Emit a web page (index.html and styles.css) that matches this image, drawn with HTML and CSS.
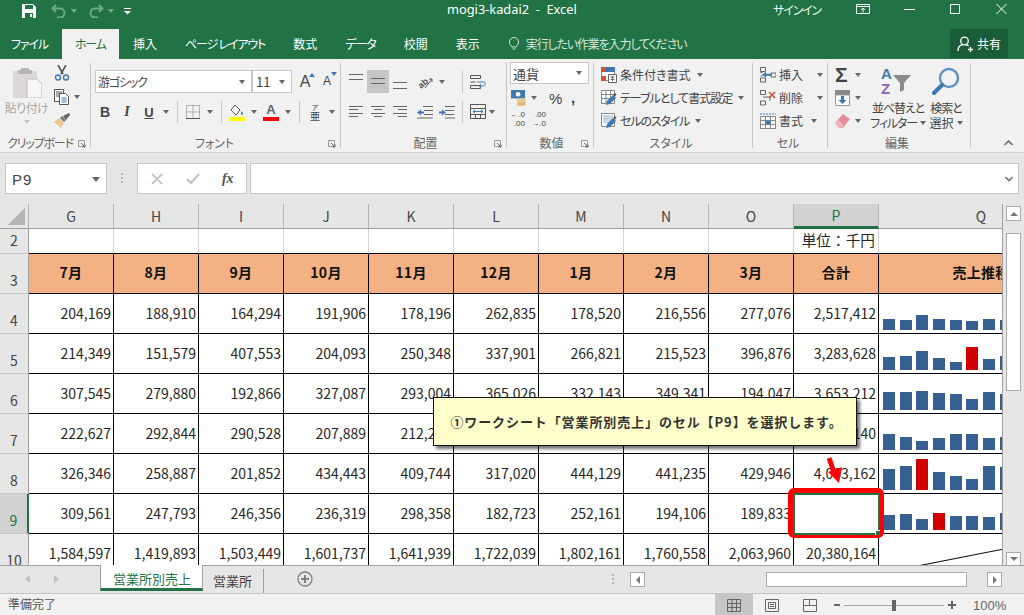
FILE: index.html
```html
<!DOCTYPE html>
<html lang="ja">
  <head>
    <meta charset="UTF-8" />
    <title>mogi3-kadai2 - Excel</title>
    <link rel="stylesheet" href="styles.css">
  </head>
  <body>
    <svg class="sprites">
      <symbol id="al-top" viewBox="0 0 22 23"><path d="M4 4.500h14M4 9.500h14" stroke="#666" fill="none"/></symbol>
      <symbol id="al-mid" viewBox="0 0 22 23"><path d="M4 8.500h14M4 13.500h14" stroke="#666" fill="none"/></symbol>
      <symbol id="al-bot" viewBox="0 0 22 23"><path d="M4 12.500h14M4 18.500h14" stroke="#666" fill="none"/></symbol>
      <symbol id="al-left" viewBox="0 0 22 23"><path d="M4 6.500h14M4 9.500h9M4 13.500h14M4 16.500h9" stroke="#666" fill="none"/></symbol>
      <symbol id="al-center" viewBox="0 0 22 23"><path d="M4 6.500h14M7 9.500h8M4 13.500h14M7 16.500h8" stroke="#666" fill="none"/></symbol>
      <symbol id="al-right" viewBox="0 0 22 23"><path d="M4 6.500h14M9 9.500h9M4 13.500h14M9 16.500h9" stroke="#666" fill="none"/></symbol>
      <symbol id="launcher" viewBox="0 0 8 8"><path d="M.5 .5h6v6h-6z" fill="none" stroke="#999"/><path d="M3 3l4 4M4.500 7H7V4.500" fill="none" stroke="#666"/></symbol>
      <symbol id="pen" viewBox="0 0 16 16"><path d="M5 15l1-4 6-6 3 3-6 6z" fill="#3f78b0"/><path d="M12 5l2-2 1.500 1.500-1.500 2z" fill="#555"/></symbol>
    </svg>

    <header class="titlebar">
      <div class="qat">
        <svg class="qat-save" viewBox="0 0 14 14"><path d="M0 0h11l3 3v11H0z" fill="#fff"/><path d="M3 1h8v4H3zM3 9h8v5H3z" fill="#217346"/><path d="M8 10h2v3H8z" fill="#fff"/></svg>
        <svg class="qat-arrow" viewBox="0 0 16 14"><path d="M5 1L1.500 4.500 5 8M2 4.500h7a4.500 4.500 0 0 1 0 9H6" fill="none" stroke="#6fa78a" stroke-width="2"/></svg>
        <i class="caret caret-dim"></i>
        <svg class="qat-arrow" viewBox="0 0 16 14"><path d="M11 1l3.500 3.500L11 8M14 4.500H7a4.500 4.500 0 0 0 0 9h3" fill="none" stroke="#6fa78a" stroke-width="2"/></svg>
        <i class="caret caret-dim"></i>
        <svg class="qat-more" viewBox="0 0 7 7"><path d="M0 .5h7" stroke="#fff"/><path d="M0 3h7L3.500 6.500z" fill="#fff"/></svg>
      </div>
      <div class="doc-title">mogi3-kadai2&nbsp; -&nbsp; Excel</div>
      <div class="signin kana">サインイン</div>
      <div class="win-btns">
        <svg class="win-display" viewBox="0 0 14 10"><path d="M.5 .5h13v9H.5zM.5 2.500h13M7 8.500V4M5 6l2-2 2 2" fill="none" stroke="#fff"/></svg>
        <svg class="win-min" viewBox="0 0 11 10"><path d="M0 5.500h11" stroke="#fff"/></svg>
        <svg class="win-max" viewBox="0 0 11 10"><path d="M.5 .5h9v9h-9z" fill="none" stroke="#fff"/></svg>
        <svg class="win-close" viewBox="0 0 11 10"><path d="M.5 0l10 10M10.500 0l-10 10" fill="none" stroke="#fff"/></svg>
      </div>
    </header>

    <nav class="tabs">
      <span class="tab tab-file kana">ファイル</span>
      <span class="tab tab-on kana">ホーム</span>
      <span class="tab">挿入</span>
      <span class="tab kana">ページ レイアウト</span>
      <span class="tab">数式</span>
      <span class="tab kana-soft">データ</span>
      <span class="tab">校閲</span>
      <span class="tab">表示</span>
      <span class="tell kana">
        <svg class="tell-bulb" viewBox="0 0 10 14"><path d="M3 10C2 8 .5 7.500 .5 5a4.500 4.500 0 0 1 9 0c0 2.500-1.500 3-2.500 5zM3.500 12h3" fill="none" stroke="#d6e6dc"/></svg>
        実行したい作業を入力してください
      </span>
      <span class="share">
        <svg class="share-icon" viewBox="0 0 16 16"><circle cx="7.500" cy="5" r="3.800" fill="none" stroke="#fff" stroke-width="1.300"/><path d="M1 15c0-4 2.500-6 5-6.300M9 8.700c1 .2 2 .7 2.600 1.500M11 13.500h5M13.500 11v5" fill="none" stroke="#fff" stroke-width="1.300"/></svg>
        共有
      </span>
    </nav>

    <section class="ribbon">
      <div class="group g-clip">
        <div class="group-body clip-body">
          <div class="paste">
            <svg class="paste-icon" viewBox="0 0 29 31"><path d="M0 4h24v27H0z" fill="#dcd7da"/><path d="M8 1h8v2h3v4H5V3h3z" fill="#b9b3b6"/><path d="M14 12h10l5 5v14H14z" fill="#f7f7f7" stroke="#bdbdbd"/></svg>
            <span class="paste-label">貼り付け</span>
            <i class="caret caret-light"></i>
          </div>
          <div class="clip-tools">
            <svg class="tool16" viewBox="0 0 16 16"><path d="M4 0l5 9M12 0L7 9" stroke="#555" stroke-width="1.600" fill="none"/><circle cx="4" cy="12.500" r="2.500" fill="none" stroke="#3f78b0" stroke-width="1.400"/><circle cx="12" cy="12.500" r="2.500" fill="none" stroke="#3f78b0" stroke-width="1.400"/></svg>
            <span class="tool-line"><svg class="tool16" viewBox="0 0 16 16"><path d="M.5 .5h9v12h-9zM2 3h6M2 5h6M2 7h6" fill="#fff" stroke="#555"/><path d="M5.500 4.500h6l3 3v8h-9z" fill="#fff" stroke="#555"/><path d="M7.500 9h5M7.500 11h5M7.500 13h5" stroke="#3f78b0"/></svg><i class="caret"></i></span>
            <svg class="tool16" viewBox="0 0 16 16"><path d="M9 3l6-3 1 2-4 5z" fill="#666"/><path d="M8 3l4 4-2 2-4-4z" fill="#777"/><path d="M5 5l5 5-3 5-7-6z" fill="#edc68f"/></svg>
          </div>
        </div>
        <div class="group-foot"><span class="kana">クリップボード</span><svg class="launch"><use href="#launcher"/></svg></div>
      </div>

      <div class="group g-font">
        <div class="group-body">
          <div class="row font-top">
            <span class="combo combo-font"><span class="kana">游ゴシック</span><i class="caret"></i></span>
            <span class="combo combo-size">11<i class="caret"></i></span>
            <span class="grow-a">A<svg viewBox="0 0 6 4"><path d="M0 4h6L3 0z" fill="#3f78b0"/></svg></span>
            <span class="grow-a shrink-a">A<svg viewBox="0 0 6 4"><path d="M0 0h6L3 4z" fill="#3f78b0"/></svg></span>
          </div>
          <div class="row font-bottom">
            <span class="tb tb-b">B</span>
            <span class="tb tb-i">I</span>
            <span class="tb tb-u">U</span><span class="tc"><i class="caret"></i></span>
            <i class="vsep"></i>
            <span class="tb"><svg class="tool14" viewBox="0 0 14 14"><path d="M.5 .5h13v13H.5z" fill="none" stroke="#777" stroke-dasharray="1 1"/><path d="M7 .5v13M.5 7h13" stroke="#777" stroke-dasharray="1 1"/><path d="M0 13.500h14" stroke="#555"/></svg></span><span class="tc"><i class="caret"></i></span>
            <i class="vsep"></i>
            <span class="tb"><svg class="tool-color" viewBox="0 0 16 17"><path d="M6 1l5 5-4 5-5-5z" fill="#fff" stroke="#555"/><path d="M12 7c1 1 2 2 2 3s-2 1-2 0z" fill="#3f78b0"/><path d="M0 13h16v4H0z" fill="#ff0"/></svg></span><span class="tc tc-tight"><i class="caret"></i></span>
            <span class="tb tb-color">A<i></i></span><span class="tc tc-tight"><i class="caret"></i></span>
            <i class="vsep"></i>
            <span class="tb tb-ruby"><small>ア</small>亜</span><span class="tc"><i class="caret"></i></span>
          </div>
        </div>
        <div class="group-foot"><span>フォント</span><svg class="launch"><use href="#launcher"/></svg></div>
      </div>

      <div class="group g-align">
        <div class="group-body">
          <div class="row align-top">
            <svg class="tb-svg"><use href="#al-top"/></svg>
            <svg class="tb-svg tb-active"><use href="#al-mid"/></svg>
            <svg class="tb-svg"><use href="#al-bot"/></svg>
            <span class="tb tb-gap"><svg class="tool16" viewBox="0 0 16 16"><text x="0" y="12" class="orient" transform="rotate(-40 6 8)">ab</text><path d="M8 14L15 5M12 5h3v3" fill="none" stroke="#555"/></svg></span><span class="tc"><i class="caret"></i></span>
            <i class="vsep vsep-align"></i>
            <svg class="tool-wrap" viewBox="0 0 16 14"><path d="M.5 .5h10v3H.5zM.5 10.500h10v3H.5zM.500 7h5" fill="none" stroke="#555"/><path d="M7 7h7c2 0 2 4-1 4h-3M11 9l-2 2 2 2" fill="none" stroke="#3f78b0"/></svg>
          </div>
          <div class="row align-bottom">
            <svg class="tb-svg"><use href="#al-left"/></svg>
            <svg class="tb-svg"><use href="#al-center"/></svg>
            <svg class="tb-svg"><use href="#al-right"/></svg>
            <span class="tb tb-gap"><svg class="tool16" viewBox="0 0 16 14"><path d="M6 1.500h10M7 5.500h9M7 9.500h9M0 13h16" stroke="#666"/><path d="M0 7.500l4-3v2h3v2H4v2z" fill="#3f78b0"/></svg></span>
            <span class="tb"><svg class="tool16" viewBox="0 0 16 14"><path d="M0 1.500h10M0 5.500h9M0 9.500h9M0 13h16" stroke="#666" transform="translate(6 0)"/><path d="M7 7.500l-4-3v2H0v2h3v2z" fill="#3f78b0"/></svg></span>
            <i class="vsep vsep-merge"></i>
            <svg class="tool-merge" viewBox="0 0 16 15"><path d="M.5 .5h15v14H.5zM.5 4.500h15M.5 10.500h15M5.500 10.500v4M10.500 10.500v4" fill="none" stroke="#555"/><path d="M3 7.500h10M5 6L3 7.500 5 9M11 6l2 1.500L11 9" fill="none" stroke="#3f78b0"/></svg><span class="tc"><i class="caret"></i></span>
          </div>
        </div>
        <div class="group-foot"><span>配置</span><svg class="launch"><use href="#launcher"/></svg></div>
      </div>

      <div class="group g-num">
        <div class="group-body">
          <span class="combo combo-num">通貨<i class="caret"></i></span>
          <div class="row num-mid">
            <svg class="tool16" viewBox="0 0 17 17"><path d="M0 0h15v9H0z" fill="#3f78b0"/><circle cx="7.500" cy="4.500" r="2.500" fill="#fff"/><ellipse cx="11" cy="10.500" rx="5" ry="1.800" fill="#edc68f"/><ellipse cx="11" cy="13" rx="5" ry="1.800" fill="#edc68f"/><ellipse cx="11" cy="15.200" rx="5" ry="1.800" fill="#e6b878"/></svg>
            <i class="caret caret-num"></i>
            <span class="pct">%</span>
            <span class="comma">,</span>
          </div>
          <div class="row num-low">
            <span class="dec"><b>←.0</b><b>.00</b></span>
            <span class="dec"><b>.00</b><b>→.0</b></span>
          </div>
        </div>
        <div class="group-foot"><span>数値</span><svg class="launch"><use href="#launcher"/></svg></div>
      </div>

      <div class="group g-style">
        <div class="group-body list-body">
          <div class="list-row">
            <svg class="tool16" viewBox="0 0 16 16"><path d="M.5 .5h13v13H.5z" fill="#fff" stroke="#888"/><path d="M0 0h5v5H0zM0 9h5v5H0z" fill="#d0552f"/><path d="M5 0h9v5H5z" fill="#3f78b0"/><path d="M7.500 7.500h8v8h-8z" fill="#fff" stroke="#666"/><path d="M9.500 10h4M9.500 12.500h4M11.500 9v5" stroke="#666"/></svg>
            条件付き書式<i class="caret"></i>
          </div>
          <div class="list-row">
            <svg class="tool16" viewBox="0 0 16 16"><path d="M.5 .5h13v13H.5zM.5 4.500h13M.5 8.500h13M5 .5v13M9.500 .5v13" fill="#fff" stroke="#888"/><use href="#pen"/></svg>
            <span class="kana-soft">テーブルとして書式設定</span><i class="caret"></i>
          </div>
          <div class="list-row">
            <svg class="tool16" viewBox="0 0 16 16"><path d="M.5 .5h13v13H.5z" fill="#fff" stroke="#888"/><path d="M2 2h10v8H2z" fill="#c7d5e6"/><use href="#pen"/></svg>
            <span class="kana">セルのスタイル</span><i class="caret"></i>
          </div>
        </div>
        <div class="group-foot foot-plain"><span>スタイル</span></div>
      </div>

      <div class="group g-cells">
        <div class="group-body list-body">
          <div class="list-row">
            <svg class="tool16" viewBox="0 0 16 16"><path d="M.5 .5h5v4h-5zM.5 11h5v4h-5zM.5 5.500h2M.5 9h2M11 6h5v4h-5z" fill="none" stroke="#666"/><path d="M2 7.700l4-3v2h6v2H6v2z" fill="#3f78b0"/></svg>
            <span class="cell-label">挿入</span><i class="caret"></i>
          </div>
          <div class="list-row">
            <svg class="tool16" viewBox="0 0 16 16"><path d="M.5 .5h5v4h-5zM.5 11h5v4h-5zM3 7h7v4" fill="none" stroke="#666"/><path d="M9 2l6 6M15 2l-6 6" stroke="#d0552f" stroke-width="1.600"/></svg>
            <span class="cell-label">削除</span><i class="caret"></i>
          </div>
          <div class="list-row">
            <svg class="tool16" viewBox="0 0 16 16"><path d="M.5 3.500h15v12H.5zM.5 7.500h15M.5 11.500h15M5.500 3.500v12M10.500 3.500v12" fill="#fff" stroke="#888"/><path d="M5.500 7.500h5v4h-5z" fill="#3f78b0"/><path d="M0 1h16" stroke="#3f78b0" stroke-dasharray="2 1"/></svg>
            <span class="cell-label label-short">書式</span><i class="caret"></i>
          </div>
        </div>
        <div class="group-foot foot-plain"><span>セル</span></div>
      </div>

      <div class="group g-edit">
        <div class="group-body edit-body">
          <div class="edit-tools">
            <span class="edit-line"><span class="sigma">Σ</span><i class="caret"></i></span>
            <span class="edit-line"><svg class="tool-fill" viewBox="0 0 15 16"><path d="M0 0h15v5H0z" fill="#8a8a8a"/><path d="M.5 5h14v10.500H.5z" fill="#fff" stroke="#999"/><path d="M6 6h3v4h2.500l-4 4-4-4H6z" fill="#3f78b0"/></svg><i class="caret"></i></span>
            <span class="edit-line"><svg class="tool-fill" viewBox="0 0 15 14"><path d="M0 9l8-9 7 5-7 9H4z" fill="#e78a9a"/><path d="M0 9l3-3 6 5-2 3H4z" fill="#f0b3be"/></svg><i class="caret"></i></span>
          </div>
          <div class="big-btn btn-sort">
            <svg class="big-icon" viewBox="0 0 31 28"><text x="0" y="12" class="sort-a">A</text><text x="0" y="27" class="sort-z">Z</text><path d="M12 8h18l-7 8v7l-4 2v-9z" fill="#8c8c8c"/></svg>
            <span class="kana">並べ替えと</span>
            <span class="kana">フィルター<i class="caret"></i></span>
          </div>
          <div class="big-btn btn-find">
            <svg class="big-icon" viewBox="0 0 28 28"><circle cx="17" cy="11" r="9" fill="none" stroke="#5b93c9" stroke-width="2.400"/><path d="M10 18L2 26" stroke="#3f78b0" stroke-width="4" stroke-linecap="round"/></svg>
            <span class="kana-soft">検索と</span>
            <span>選択<i class="caret"></i></span>
          </div>
        </div>
        <div class="group-foot foot-plain"><span>編集</span></div>
      </div>
      <svg class="collapse" viewBox="0 0 9 6"><path d="M.5 5l4-4 4 4" fill="none" stroke="#666" stroke-width="1.500"/></svg>
    </section>

    <section class="formula">
      <div class="namebox">P9<i class="caret caret-big"></i></div>
      <svg class="grip" viewBox="0 0 2 10"><path d="M0 0h2v2H0zM0 4h2v2H0zM0 8h2v2H0z" fill="#b5b5b5"/></svg>
      <div class="fx-btns">
        <svg class="fx-x" viewBox="0 0 12 12"><path d="M1 1l10 10M11 1L1 11" stroke="#c6c6c6" stroke-width="2"/></svg>
        <svg class="fx-check" viewBox="0 0 14 12"><path d="M1 6l4 4 8-9" fill="none" stroke="#c6c6c6" stroke-width="2.400"/></svg>
        <span class="fx-f">fx</span>
      </div>
      <div class="fx-input"><svg class="fx-chev" viewBox="0 0 8 6"><path d="M.5 1l3.500 3.500L7.500 1" fill="none" stroke="#777" stroke-width="1.600"/></svg></div>
    </section>

    <main class="work">
      <div class="sheet">
        <div class="grid">
          <div class="colh corner"><svg viewBox="0 0 17 17"><path d="M17 0v17H0z" fill="#b5b5b5"/></svg></div>
          <div class="colh">G</div><div class="colh">H</div><div class="colh">I</div><div class="colh">J</div><div class="colh">K</div><div class="colh">L</div><div class="colh">M</div><div class="colh">N</div><div class="colh">O</div><div class="colh colh-on">P</div><div class="colh colh-q">Q</div>

          <div class="rowh">2</div>
          <div class="c c-plain"></div><div class="c c-plain"></div><div class="c c-plain"></div><div class="c c-plain"></div><div class="c c-plain"></div><div class="c c-plain"></div><div class="c c-plain"></div><div class="c c-plain"></div><div class="c c-plain"></div><div class="c c-plain c-unit">単位：千円</div><div class="c c-plain c-last"></div>

          <div class="rowh">3</div>
          <div class="c c-head">7月</div><div class="c c-head">8月</div><div class="c c-head">9月</div><div class="c c-head">10月</div><div class="c c-head">11月</div><div class="c c-head">12月</div><div class="c c-head">1月</div><div class="c c-head">2月</div><div class="c c-head">3月</div><div class="c c-head">合計</div><div class="c c-head c-trend">売上推移</div>

          <div class="rowh">4</div>
          <div class="c">204,169</div><div class="c">188,910</div><div class="c">164,294</div><div class="c">191,906</div><div class="c">178,196</div><div class="c">262,835</div><div class="c">178,520</div><div class="c">216,556</div><div class="c">277,076</div><div class="c">2,517,412</div>
          <div class="c c-spark"><i style="height:11px"></i><i style="height:10px"></i><i style="height:15px"></i><i style="height:11px"></i><i style="height:10px"></i><i style="height:9px"></i><i style="height:11px"></i><i style="height:10px"></i></div>

          <div class="rowh">5</div>
          <div class="c">214,349</div><div class="c">151,579</div><div class="c">407,553</div><div class="c">204,093</div><div class="c">250,348</div><div class="c">337,901</div><div class="c">266,821</div><div class="c">215,523</div><div class="c">396,876</div><div class="c">3,283,628</div>
          <div class="c c-spark"><i style="height:13px"></i><i style="height:14px"></i><i style="height:19px"></i><i style="height:12px"></i><i style="height:8px"></i><i class="peak" style="height:23px"></i><i style="height:11px"></i><i style="height:14px"></i></div>

          <div class="rowh">6</div>
          <div class="c">307,545</div><div class="c">279,880</div><div class="c">192,866</div><div class="c">327,087</div><div class="c">293,004</div><div class="c">365,026</div><div class="c">332,143</div><div class="c">349,341</div><div class="c">194,047</div><div class="c">3,653,212</div>
          <div class="c c-spark"><i style="height:18px"></i><i style="height:18px"></i><i style="height:19px"></i><i style="height:17px"></i><i style="height:16px"></i><i style="height:11px"></i><i style="height:18px"></i><i style="height:16px"></i></div>

          <div class="rowh">7</div>
          <div class="c">222,627</div><div class="c">292,844</div><div class="c">290,528</div><div class="c">207,889</div><div class="c">212,254</div><div class="c">298,417</div><div class="c">301,262</div><div class="c">268,330</div><div class="c">245,388</div><div class="c">2,940,140</div>
          <div class="c c-spark"><i style="height:16px"></i><i style="height:13px"></i><i style="height:9px"></i><i style="height:12px"></i><i style="height:16px"></i><i style="height:16px"></i><i style="height:12px"></i><i style="height:13px"></i></div>

          <div class="rowh">8</div>
          <div class="c">326,346</div><div class="c">258,887</div><div class="c">201,852</div><div class="c">434,443</div><div class="c">409,744</div><div class="c">317,020</div><div class="c">444,129</div><div class="c">441,235</div><div class="c">429,946</div><div class="c">4,063,162</div>
          <div class="c c-spark"><i style="height:21px"></i><i style="height:24px"></i><i class="peak" style="height:31px"></i><i style="height:18px"></i><i style="height:14px"></i><i style="height:11px"></i><i style="height:24px"></i><i style="height:23px"></i></div>

          <div class="rowh rowh-on">9</div>
          <div class="c">309,561</div><div class="c">247,793</div><div class="c">246,356</div><div class="c">236,319</div><div class="c">298,358</div><div class="c">182,723</div><div class="c">252,161</div><div class="c">194,106</div><div class="c">189,833</div><div class="c"></div>
          <div class="c c-spark"><i style="height:15px"></i><i style="height:16px"></i><i style="height:11px"></i><i class="peak" style="height:17px"></i><i style="height:14px"></i><i style="height:14px"></i><i style="height:13px"></i><i style="height:17px"></i></div>

          <div class="rowh">10</div>
          <div class="c">1,584,597</div><div class="c">1,419,893</div><div class="c">1,503,449</div><div class="c">1,601,737</div><div class="c">1,641,939</div><div class="c">1,722,039</div><div class="c">1,802,161</div><div class="c">1,760,558</div><div class="c">2,063,960</div><div class="c">20,380,164</div>
          <div class="c c-diag"><svg viewBox="0 0 204 40"><path d="M0 40L204 0" stroke="#000" fill="none"/></svg></div>
        </div>

        <div class="sel-ring"></div>
        <div class="sel-cell"><i></i></div>
        <svg class="sel-arrow" viewBox="0 0 16 28"><path d="M2 1l6 17" stroke="#f00" stroke-width="5" fill="none"/><path d="M12 26L1 15l14-5z" fill="#f00"/></svg>
        <div class="callout">①ワークシート「営業所別売上」のセル【P9】を選択します。</div>
      </div>

      <div class="vscroll">
        <span class="sb-btn"><i class="arrow-up"></i></span>
        <span class="sb-thumb"></span>
        <span class="sb-btn sb-btn-end"><i class="arrow-down"></i></span>
      </div>
    </main>

    <section class="sheetbar">
      <i class="nav-l"></i><i class="nav-r"></i>
      <span class="stab stab-on">営業所別売上</span>
      <span class="stab">営業所</span>
      <svg class="add-sheet" viewBox="0 0 16 16"><circle cx="8" cy="8" r="7" fill="none" stroke="#808080" stroke-width="1.300"/><path d="M8 4v8M4 8h8" stroke="#808080" stroke-width="2"/></svg>
      <svg class="hs-grip" viewBox="0 0 2 10"><path d="M0 0h2v2H0zM0 4h2v2H0zM0 8h2v2H0z" fill="#b5b5b5"/></svg>
      <div class="hscroll">
        <span class="sb-btn hs-btn"><i class="arrow-left"></i></span>
        <span class="hs-track"><span class="sb-thumb hs-thumb"></span></span>
        <span class="sb-btn hs-btn"><i class="arrow-right"></i></span>
      </div>
    </section>

    <footer class="status">
      <span class="ready">準備完了</span>
      <span class="view view-on"><svg viewBox="0 0 14 13"><path d="M.5 .5h13v12H.5zM.5 4.500h13M.5 8.500h13M5 .5v12M9.500 .5v12" fill="none" stroke="#666"/></svg></span>
      <span class="view"><svg viewBox="0 0 14 13"><path d="M.5 .5h13v12H.5zM3.500 3.500h7v6h-7zM5 5.500h4M5 7.500h4" fill="none" stroke="#666"/></svg></span>
      <span class="view"><svg viewBox="0 0 14 13"><path d="M.5 .5h13v12H.5zM6.500 .5v6h7M6.500 6.500H.5" fill="none" stroke="#666"/></svg></span>
      <span class="zoom-minus"></span>
      <span class="zoom-track"><i></i></span>
      <span class="zoom-plus"></span>
      <span class="zoom-val">100%</span>
    </footer>
  </body>
</html>
```

FILE: styles.css
```css
* {
  box-sizing: border-box;
}

html,
body {
  margin: 0;
  width: 1024px;
  height: 615px;
  overflow: hidden;
}

body {
  font-family: "Noto Sans CJK JP", sans-serif;
  font-size: 12px;
  font-feature-settings: "palt";
  color: #444;
  background: #e6e6e6;
}

.sprites {
  display: none;
}

svg {
  display: block;
  flex: none;
}

i {
  display: block;
  font-style: normal;
}

.kana {
  letter-spacing: -1.150px;
}

.kana-soft {
  letter-spacing: -1px;
}

/* title bar */
.titlebar {
  height: 29px;
  background: #217346;
  color: #fff;
  display: flex;
  align-items: flex-start;
  position: relative;
}

.qat {
  display: flex;
  align-items: center;
  padding-left: 22px;
  margin-top: 4px;
  width: 140px;
}

.qat-save {
  width: 14px;
  height: 14px;
  margin-right: 15px;
}

.qat-arrow {
  width: 16px;
  height: 14px;
}

.caret-dim {
  border-top-color: #6fa78a !important;
  margin: 0 11px 0 4px;
}

.qat-more {
  width: 7px;
  height: 7px;
  margin-left: -1px;
}

.doc-title {
  margin-left: 307px;
  width: 326px;
  line-height: 19px;
  font-family: "Noto Sans", sans-serif;
  font-size: 12.800px;
  font-feature-settings: normal;
}

.signin {
  width: 83px;
  line-height: 19px;
  color: #eef5f0;
}

.win-btns {
  display: flex;
  align-items: center;
  margin-top: 4px;
}

.win-display {
  width: 14px;
  height: 10px;
  margin-right: 34px;
}

.win-min,
.win-max,
.win-close {
  width: 11px;
  height: 10px;
}

.win-min,
.win-max {
  margin-right: 35px;
}

/* ribbon tabs */
.tabs {
  height: 30px;
  background: #217346;
  color: #fff;
  display: flex;
  align-items: stretch;
}

.tab {
  padding: 0 14px;
  line-height: 29px;
  white-space: nowrap;
}

.tab-file {
  padding-left: 11px;
}

.tab-on {
  background: #f1f1f1;
  color: #217346;
  padding: 0 13px;
  width: 57px;
}

.tell {
  display: flex;
  align-items: center;
  margin-left: 15px;
  padding-bottom: 1px;
  color: #d6e6dc;
}

.tell-bulb {
  width: 10px;
  height: 14px;
  margin-right: 7px;
}

.share {
  margin-left: auto;
  margin-right: 16px;
  width: 58px;
  background: #1a5c38;
  display: flex;
  align-items: center;
  gap: 4px;
  padding-left: 7px;
  margin-bottom: 1px;
}

.share-icon {
  width: 16px;
  height: 16px;
}

/* ribbon */
.ribbon {
  height: 94px;
  background: #f1f1f1;
  border-bottom: 1px solid #d2d2d2;
  display: flex;
  padding-top: 4px;
  position: relative;
}

.group {
  height: 85px;
  border-right: 1px solid #c6c6c6;
  display: flex;
  flex-direction: column;
  flex: none;
}

.group-body {
  height: 70px;
}

.group-foot {
  height: 15px;
  display: flex;
  justify-content: center;
  align-items: flex-start;
  position: relative;
  color: #666;
  line-height: 15px;
  padding-top: 3px;
}

.group-foot span {
  position: relative;
  top: -1px;
}

.launch {
  position: absolute;
  right: 4px;
  top: 7px;
  width: 8px;
  height: 8px;
}

.caret {
  width: 0;
  height: 0;
  border: 3.500px solid transparent;
  border-top: 4px solid #666;
  border-bottom: 0;
  flex: none;
}

.caret-light {
  border-top-color: #c4c4c4;
}

.row {
  display: flex;
  align-items: center;
}

.g-clip {
  width: 91px;
}

.g-clip .group-foot {
  justify-content: flex-start;
  padding-left: 7px;
}

.clip-body {
  display: flex;
}

.paste {
  width: 54px;
  display: flex;
  flex-direction: column;
  align-items: center;
  padding-top: 4px;
}

.paste-icon {
  width: 29px;
  height: 31px;
  margin-left: 4px;
  margin-right: 4px;
}

.paste-label {
  color: #a6a6a6;
  line-height: 16px;
  margin-top: 2px;
  margin-left: -1px;
  letter-spacing: -.6px;
  white-space: nowrap;
}

.paste .caret {
  margin-top: 4px;
}

.clip-tools {
  display: flex;
  flex-direction: column;
  gap: 8px;
  padding-top: 2px;
}

.tool-line {
  display: flex;
  align-items: center;
  gap: 4px;
}

.tool16 {
  width: 16px;
  height: 16px;
}

.tool14 {
  width: 14px;
  height: 14px;
}

.g-font {
  width: 250px;
  padding-left: 4px;
}

.g-font .group-foot {
  padding-right: 6px;
}

.font-top {
  margin-top: 7px;
  height: 23px;
}

.combo {
  background: #fff;
  border: 1px solid #c6c6c6;
  height: 23px;
  display: flex;
  align-items: center;
  justify-content: space-between;
  padding: 0 6px 0 2px;
  color: #444;
}

.combo-font {
  width: 157px;
}

.combo-size {
  width: 40px;
  padding-left: 3px;
  font-size: 13px;
  margin-right: 4px;
}

.grow-a {
  display: flex;
  width: 22px;
  font-size: 16px;
  justify-content: center;
  position: relative;
  font-family: "Liberation Sans", sans-serif;
  line-height: 23px;
  padding-right: 4px;
}

.grow-a svg {
  position: absolute;
  right: 3px;
  top: 3px;
  width: 6px;
  height: 4px;
}

.shrink-a {
  font-size: 12px;
  line-height: 25px;
}

.font-bottom {
  margin-top: 8px;
  margin-left: -1px;
  height: 22px;
}

.tb {
  width: 22px;
  height: 22px;
  display: flex;
  align-items: center;
  justify-content: center;
  font-family: "Liberation Sans", sans-serif;
  font-size: 14px;
  flex: none;
}

.tb-b {
  font-weight: bold;
}

.tb-i {
  font-style: italic;
  font-family: "Liberation Serif", serif;
  font-weight: bold;
}

.tb-u {
  text-decoration: underline;
  font-weight: bold;
  font-size: 13px;
}

.tb-color {
  flex-direction: column;
  font-size: 13px;
  line-height: 13px;
  font-weight: bold;
  color: #666;
}

.tb-color i {
  width: 16px;
  height: 4px;
  background: #f00;
  margin-top: 1px;
}

.tool-color {
  width: 16px;
  height: 17px;
}

.tb-ruby {
  flex-direction: column;
  font-family: "Noto Sans CJK JP", sans-serif;
  font-size: 10px;
  line-height: 10px;
}

.tb-ruby small {
  font-size: 7px;
  line-height: 8px;
}

.tc {
  width: 12px;
  display: flex;
  justify-content: center;
  flex: none;
}

.tc-tight {
  width: 12px;
}

.vsep {
  width: 1px;
  height: 22px;
  background: #c6c6c6;
  margin: 0 4px 0 5px;
  flex: none;
}

.g-align {
  width: 166px;
  padding-left: 4px;
}

.align-top {
  margin-top: 7px;
  height: 23px;
}

.align-bottom {
  margin-top: 7px;
  height: 23px;
}

.tb-svg {
  width: 22px;
  height: 23px;
}

.tb-active {
  background: #c6c6c6;
}

.tb-gap {
  margin-left: 3px;
}

.orient {
  font-family: "Liberation Sans", sans-serif;
  font-size: 9px;
  font-weight: bold;
  fill: #555;
}

.vsep-align {
  margin: 0 7px 0 14px;
}

.vsep-merge {
  margin: 0 7px 0 4px;
}

.tool-wrap {
  width: 16px;
  height: 14px;
}

.tool-merge {
  width: 16px;
  height: 15px;
}

.g-num {
  width: 87px;
  padding-left: 3px;
}

.combo-num {
  width: 79px;
  height: 22px;
  margin-top: -1px;
  font-size: 13px;
  padding-left: 2px;
}

.num-mid {
  margin-top: 3px;
  height: 22px;
  padding-left: 1px;
}

.caret-num {
  margin: 0 12px 0 4px;
}

.pct {
  font-family: "Liberation Sans", sans-serif;
  font-size: 15px;
  width: 22px;
}

.comma {
  font-family: "Liberation Sans", sans-serif;
  font-weight: bold;
  font-size: 15px;
  line-height: 10px;
}

.num-low {
  gap: 7px;
  margin-top: 1px;
  padding-left: 1px;
}

.dec {
  display: flex;
  flex-direction: column;
  font-family: "Liberation Sans", sans-serif;
  font-size: 8px;
  line-height: 9px;
  align-items: flex-end;
  width: 14px;
}

.dec b {
  font-weight: normal;
  white-space: nowrap;
}

.g-style {
  width: 159px;
}

.g-cells {
  width: 75px;
}

.list-body {
  padding-left: 7px;
  display: flex;
  flex-direction: column;
}

.list-row {
  height: 23px;
  display: flex;
  align-items: center;
  white-space: nowrap;
  gap: 3px;
}

.list-row .caret {
  margin-left: 3px;
}

.cell-label {
  width: 32px;
}

.label-short {
  width: 26px;
}

.foot-plain {
  padding-right: 4px;
}

.g-edit {
  width: 143px;
}

.edit-body {
  display: flex;
}

.edit-tools {
  display: flex;
  flex-direction: column;
  padding-left: 7px;
  width: 40px;
}

.edit-line {
  display: flex;
  align-items: center;
  height: 24px;
  gap: 5px;
}

.sigma {
  font-family: "Liberation Sans", sans-serif;
  font-weight: bold;
  font-size: 21px;
  width: 15px;
  line-height: 20px;
}

.tool-fill {
  width: 15px;
  height: 16px;
}

.big-btn {
  display: flex;
  flex-direction: column;
  align-items: center;
  line-height: 15px;
  white-space: nowrap;
}

.big-btn span {
  display: flex;
  align-items: center;
  gap: 3px;
}

.big-icon {
  height: 28px;
  margin-top: 4px;
  margin-bottom: 5px;
  overflow: visible;
}

.btn-sort {
  width: 60px;
}

.btn-sort .big-icon {
  width: 31px;
  margin-left: -3px;
}

.btn-find {
  width: 36px;
}

.btn-find .big-icon {
  width: 28px;
}

.sort-a {
  font-family: "Liberation Sans", sans-serif;
  font-size: 15px;
  font-weight: bold;
  fill: #3f78b0;
}

.sort-z {
  font-family: "Liberation Sans", sans-serif;
  font-size: 15px;
  font-weight: bold;
  fill: #8e5fb3;
}

.collapse {
  position: absolute;
  right: 11px;
  top: 81px;
  width: 9px;
  height: 6px;
}

/* formula bar */
.formula {
  height: 51px;
  background: #e6e6e6;
  display: flex;
  padding: 10px 5px 10px 5px;
}

.namebox {
  width: 102px;
  background: #fff;
  border: 1px solid #c6c6c6;
  display: flex;
  align-items: center;
  justify-content: space-between;
  padding: 2px 6px 0;
  font-family: "Liberation Sans", sans-serif;
  font-size: 15px;
  letter-spacing: 1px;
}

.caret-big {
  border-width: 4px;
  border-top-width: 5px;
}

.grip {
  width: 2px;
  height: 10px;
  margin: 10px 14px 0 14px;
}

.fx-btns {
  width: 110px;
  background: #fff;
  border: 1px solid #c6c6c6;
  display: flex;
  align-items: center;
  padding-left: 13px;
}

.fx-x {
  width: 12px;
  height: 12px;
  margin-right: 23px;
}

.fx-check {
  width: 14px;
  height: 12px;
  margin-right: 22px;
}

.fx-f {
  font-family: "Liberation Serif", serif;
  font-style: italic;
  font-weight: bold;
  font-size: 14px;
  color: #555;
}

.fx-input {
  width: 770px;
  margin-left: 3px;
  background: #fff;
  border: 1px solid #c6c6c6;
  display: flex;
  align-items: center;
  justify-content: flex-end;
  padding-right: 5px;
}

.fx-chev {
  width: 8px;
  height: 6px;
}

/* worksheet */
.work {
  height: 361px;
  display: flex;
}

.sheet {
  width: 1003px;
  height: 361px;
  overflow: hidden;
  position: relative;
  border-right: 1px solid #a0a0a0;
}

.grid {
  display: grid;
  grid-template-columns: 29px repeat(10, 85px) 204px;
  grid-template-rows: 25px 25px repeat(7, 40px);
  width: 1083px;
  color: #262626;
  font-size: 14px;
  font-feature-settings: normal;
}

.colh {
  background: #e6e6e6;
  border-right: 1px solid #b4b4b4;
  border-bottom: 1px solid #a0a0a0;
  display: flex;
  align-items: center;
  justify-content: center;
  color: #444;
  font-size: 14px;
}

.corner {
  justify-content: flex-start;
  padding: 4px 0 3px 8px;
}

.corner svg {
  width: 17px;
  height: 17px;
}

.colh-on {
  background: #d2d2d2;
  color: #217346;
  border-bottom: 3px solid #217346;
}

.colh-q {
  border-right: 0;
}

.rowh {
  background: #e6e6e6;
  border-right: 1px solid #a0a0a0;
  border-bottom: 1px solid #c6c6c6;
  display: flex;
  align-items: flex-end;
  justify-content: center;
  color: #444;
  font-size: 14px;
  line-height: 20px;
  padding-bottom: 3px;
}

.rowh-on {
  background: #d2d2d2;
  color: #217346;
  border-right: 2px solid #217346;
}

.c {
  background: #fff;
  border-right: 1px solid #000;
  border-bottom: 1px solid #000;
  display: flex;
  align-items: center;
  justify-content: flex-end;
  padding: 0 2px 1px 0;
  white-space: nowrap;
}

.c-plain {
  border-right-color: #d4d4d4;
  border-bottom-color: #000;
}

.c-unit {
  font-size: 14.670px;
  padding: 0 3px 3px 0;
}

.c-last {
  border-right: 0;
}

.c-head {
  background: #f4b183;
  font-weight: bold;
  justify-content: center;
  color: #111;
  padding: 0 0 3px;
  letter-spacing: .3px;
}

.c-trend,
.c-diag,
.c-spark {
  border-right: 0;
}

.c-spark {
  justify-content: flex-start;
  align-items: flex-end;
  gap: 4.700px;
  padding: 0 0 3px 4px;
}

.c-spark i {
  width: 12px;
  background: #376092;
  flex: none;
}

.c-spark i.peak {
  background: #d00000;
}

.c-diag {
  padding: 0;
  overflow: hidden;
}

.c-diag svg {
  width: 204px;
  height: 39px;
}

.sel-ring {
  position: absolute;
  left: 788px;
  top: 284px;
  width: 96px;
  height: 50px;
  border: 5px solid #f00;
  border-right-width: 4px;
  border-radius: 6px;
}

.sel-cell {
  position: absolute;
  left: 793px;
  top: 289px;
  width: 87px;
  height: 42px;
  border: 2px solid #217346;
}

.sel-cell i {
  position: absolute;
  right: -2px;
  bottom: -2px;
  width: 5px;
  height: 5px;
  background: #217346;
  border: 1px solid #fff;
  border-right: 0;
  border-bottom: 0;
}

.sel-arrow {
  position: absolute;
  left: 827px;
  top: 253px;
  width: 16px;
  height: 28px;
}

.callout {
  position: absolute;
  left: 433px;
  top: 193px;
  width: 424px;
  height: 49px;
  background: #ffffcc;
  border: 1px solid #111;
  box-shadow: 3px 3px 3px rgba(0, 0, 0, .55);
  display: flex;
  align-items: center;
  justify-content: center;
  font-weight: bold;
  font-size: 13px;
  letter-spacing: .9px;
  color: #333;
  white-space: nowrap;
  font-feature-settings: normal;
  padding-left: 3px;
}

.vscroll {
  width: 21px;
  padding: 2px 3px 0 3px;
  display: flex;
  flex-direction: column;
}

.sb-btn {
  background: #fff;
  border: 1px solid #ababab;
  height: 15px;
  display: flex;
  align-items: center;
  justify-content: center;
  flex: none;
}

.sb-btn-end {
  height: 14px;
  margin-top: 161px;
}

.sb-thumb {
  display: block;
  background: #fff;
  border: 1px solid #ababab;
  height: 158px;
  margin-top: 12px;
  flex: none;
}

.arrow-up,
.arrow-down,
.arrow-left,
.arrow-right {
  width: 0;
  height: 0;
  border: 4px solid transparent;
}

.arrow-up {
  border-top: 0;
  border-bottom: 4px solid #777;
}

.arrow-down {
  border-bottom: 0;
  border-top: 4px solid #777;
}

.arrow-left {
  border-left: 0;
  border-right: 4px solid #777;
}

.arrow-right {
  border-right: 0;
  border-left: 4px solid #777;
}

/* sheet tabs */
.sheetbar {
  height: 29px;
  border-top: 1px solid #a0a0a0;
  border-bottom: 1px solid #c6c6c6;
  background: #e6e6e6;
  display: flex;
  align-items: flex-start;
  position: relative;
}

.nav-l,
.nav-r {
  width: 0;
  height: 0;
  margin-top: 9px;
  border: 4px solid transparent;
}

.nav-l {
  margin-left: 25px;
  border-left: 0;
  border-right: 5px solid #c0c0c0;
}

.nav-r {
  margin-left: 24px;
  border-right: 0;
  border-left: 5px solid #c0c0c0;
  margin-right: 41px;
}

.stab {
  height: 24px;
  line-height: 24px;
  font-size: 13px;
  padding: 0 11px 0 10px;
  color: #444;
  border-right: 1px solid #a0a0a0;
  margin-top: 3px;
  font-feature-settings: normal;
  white-space: nowrap;
}

.stab-on {
  width: 103px;
  height: 26px;
  margin-top: -1px;
  padding: 0 0 0 12px;
  line-height: 28px;
  background: #fff;
  color: #217346;
  border: 1px solid #a0a0a0;
  border-top: 0;
  border-bottom: 3px solid #217346;
}

.add-sheet {
  width: 16px;
  height: 16px;
  margin: 5px 0 0 33px;
}

.hs-grip {
  width: 2px;
  height: 10px;
  margin: 8px 0 0 299px;
}

.hscroll {
  display: flex;
  align-items: center;
  margin: 6px 0 0 16px;
  height: 15px;
}

.hs-btn {
  width: 15px;
}

.hs-track {
  width: 342px;
  display: block;
  height: 15px;
}

.hs-thumb {
  width: 201px;
  height: 15px;
  margin: 0 0 0 121px;
}

/* status bar */
.status {
  height: 22px;
  background: #f1f1f1;
  display: flex;
  align-items: center;
  font-size: 12px;
}

.ready {
  width: 715px;
  padding: 0 0 3px 8px;
  color: #555;
  font-feature-settings: normal;
}

.view {
  width: 38px;
  height: 22px;
  display: flex;
  align-items: center;
  justify-content: center;
}

.view svg {
  width: 14px;
  height: 13px;
}

.view-on {
  background: #c6c6c6;
}

.zoom-minus,
.zoom-plus {
  width: 6px;
  height: 2px;
  background: #666;
  position: relative;
}

.zoom-minus {
  margin-left: 5px;
}

.zoom-plus {
  width: 8px;
}

.zoom-plus::after {
  content: "";
  position: absolute;
  left: 3px;
  top: -3px;
  width: 2px;
  height: 8px;
  background: #666;
}

.zoom-track {
  width: 100px;
  height: 1px;
  background: #a6a6a6;
  margin: 0 4px;
  position: relative;
}

.zoom-track i {
  position: absolute;
  left: 48px;
  top: -5px;
  width: 4px;
  height: 11px;
  background: #666;
}

.zoom-val {
  margin-left: 17px;
  color: #666;
  font-family: "Liberation Sans", sans-serif;
  font-size: 13px;
}
```
